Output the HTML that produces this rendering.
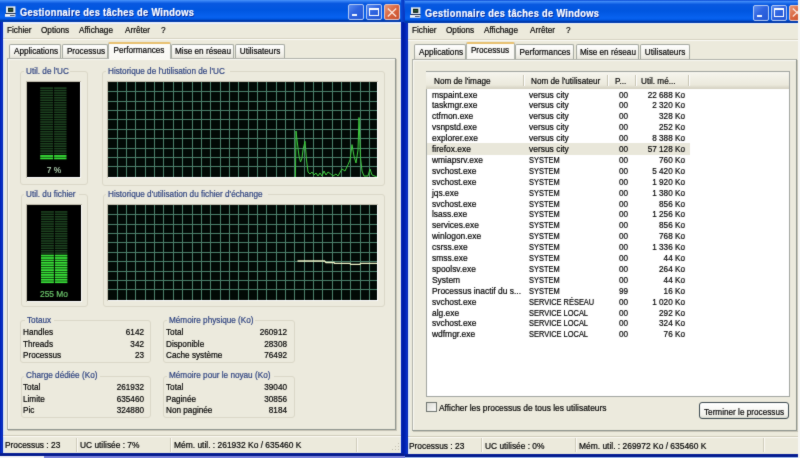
<!DOCTYPE html><html><head><meta charset="utf-8"><style>
html,body{margin:0;padding:0;width:800px;height:458px;overflow:hidden;background:#0022b0;position:relative;font-family:"Liberation Sans", sans-serif;}
.win{position:absolute;width:404px;height:458px;}
.r{position:absolute;}
.all{position:absolute;left:0;top:0;width:800px;height:458px;overflow:hidden;filter:url(#bl);}
.t{position:absolute;white-space:pre;-webkit-text-stroke:0.2px currentColor;}
</style></head><body><svg width="0" height="0" style="position:absolute"><filter id="bl" x="0" y="0" width="100%" height="100%" color-interpolation-filters="sRGB"><feConvolveMatrix order="3" kernelMatrix="0.02 0.07 0.02 0.07 0.64 0.07 0.02 0.07 0.02" edgeMode="duplicate"/></filter></svg><div class="all">
<div class="r" style="left:0.00px;top:0.00px;width:800.00px;height:23.00px;background:linear-gradient(#1a5ee0,#0a3cc8 50%,#0836b8);"></div>
<div class="r" style="left:0.00px;top:455.50px;width:800.00px;height:2.50px;background:#a8c2f0;"></div>
<div class="r" style="left:44.00px;top:455.50px;width:361.00px;height:2.50px;background:#7c84dc;"></div>
<div class="r" style="left:0.00px;top:455.50px;width:44.00px;height:2.50px;background:#f4f4f8;"></div>
<div class="win" style="left:0px;top:0px;">
<div class="r" style="left:0.00px;top:0.00px;width:404.00px;height:456.00px;background:#0022b0;"></div>
<div class="r" style="left:0.00px;top:0.00px;width:404.00px;height:22.00px;background:linear-gradient(#4a94fa 0,#2a78f0 1.5px,#0858e0 3.5px,#0056e0 45%,#0862f0 78%,#0058e4 86%,#0038a8 94%,#003cb0 100%);"></div>
<div class="r" style="left:0.00px;top:22.00px;width:3.00px;height:434.00px;background:linear-gradient(90deg,#0020b0,#0830c8 50%,#0020b0);"></div>
<div class="r" style="left:401.00px;top:22.00px;width:3.00px;height:434.00px;background:linear-gradient(90deg,#0024b4,#0020ac 50%,#001ca4);"></div>
<div class="r" style="left:401.00px;top:0.00px;width:3.00px;height:22.00px;background:linear-gradient(90deg,#0a4ad8,#0838c0);"></div>
<div class="r" style="left:0.00px;top:453.00px;width:404.00px;height:3.00px;background:linear-gradient(#0a2098,#001888);"></div>
<div class="r" style="left:3.00px;top:22.00px;width:398.00px;height:431.00px;background:#eceadc;"></div>
<div class="r" style="left:3.00px;top:22.00px;width:2.00px;height:431.00px;background:linear-gradient(90deg,#d4e2f6,#e4ecf0);"></div>
<div class="r" style="left:400.00px;top:22.00px;width:1.00px;height:431.00px;background:#dfe6f2;"></div>
<div class="r" style="left:3.00px;top:22.00px;width:398.00px;height:1.50px;background:#eaf0fa;"></div>
<svg class="r" style="left:5px;top:6px" width="11" height="11" viewBox="0 0 11 11"><rect x="1" y="0.3" width="9.4" height="6.8" fill="#e4ecf0"/><rect x="3" y="1.8" width="5.3" height="4.1" fill="#0c1c14"/><rect x="3.6" y="3.3" width="4" height="1.1" fill="#3a7a4a"/><rect x="0.6" y="7" width="10" height="0.9" fill="#1a2a4a"/><rect x="0" y="8" width="10.4" height="2.8" fill="#eef2f6"/><rect x="5" y="9" width="4.6" height="0.9" fill="#3a4660"/></svg>
<div class="t" style="left:20.00px;top:7.42px;font-size:10.6px;line-height:10.6px;color:#fff;font-weight:bold;letter-spacing:0.35px;transform:scaleX(0.875);transform-origin:0 0;text-shadow:1px 1px 0 #0a2a9a;">Gestionnaire des tâches de Windows</div>
<div class="r" style="left:347.70px;top:4.10px;width:16.00px;height:16.20px;background:linear-gradient(135deg,#5a8cf0,#2f64e0 45%,#2458d4);border:1px solid #b4cbf4;border-radius:2px;box-sizing:border-box;"></div>
<div class="r" style="left:351.70px;top:14.30px;width:5.00px;height:2.20px;background:#f4f8ff;"></div>
<div class="r" style="left:365.80px;top:4.10px;width:16.00px;height:16.20px;background:linear-gradient(135deg,#5a8cf0,#2f64e0 45%,#2458d4);border:1px solid #b4cbf4;border-radius:2px;box-sizing:border-box;"></div>
<div class="r" style="left:368.50px;top:7.70px;width:10.20px;height:8.50px;border:1px solid #fff;border-top-width:2px;box-sizing:border-box;"></div>
<div class="r" style="left:383.90px;top:4.10px;width:16.00px;height:16.20px;background:linear-gradient(135deg,#e89878,#d8643e 50%,#c8502e);border:1px solid #e8c4bc;border-radius:2px;box-sizing:border-box;"></div>
<svg class="r" style="left:386.90px;top:7.5px" width="10" height="9" viewBox="0 0 10 9"><path d="M0.8 0.6 L9.2 8.4 M9.2 0.6 L0.8 8.4" stroke="#fbe8e0" stroke-width="1.3"/></svg>
<div class="t" style="left:7.00px;top:25.96px;font-size:8.8px;line-height:8.8px;color:#000;font-weight:normal;letter-spacing:0px;transform:scaleX(0.93);transform-origin:0 0;">Fichier</div>
<div class="t" style="left:40.90px;top:25.96px;font-size:8.8px;line-height:8.8px;color:#000;font-weight:normal;letter-spacing:0px;transform:scaleX(0.93);transform-origin:0 0;">Options</div>
<div class="t" style="left:79.30px;top:25.96px;font-size:8.8px;line-height:8.8px;color:#000;font-weight:normal;letter-spacing:0px;transform:scaleX(0.93);transform-origin:0 0;">Affichage</div>
<div class="t" style="left:124.50px;top:25.96px;font-size:8.8px;line-height:8.8px;color:#000;font-weight:normal;letter-spacing:0px;transform:scaleX(0.93);transform-origin:0 0;">Arrêter</div>
<div class="t" style="left:160.60px;top:25.96px;font-size:8.8px;line-height:8.8px;color:#000;font-weight:normal;letter-spacing:0px;transform:scaleX(0.93);transform-origin:0 0;">?</div>
<div class="r" style="left:3.00px;top:38.00px;width:398.00px;height:1.00px;background:#d6d2c2;"></div>
<div class="r" style="left:3.00px;top:39.00px;width:398.00px;height:1.00px;background:#fbfaf5;"></div>
<div class="r" style="left:7.00px;top:58.00px;width:389.00px;height:372.00px;background:#eceadd;border:1px solid #b0b2aa;border-right-color:#8e948e;border-bottom-color:#8e948e;box-sizing:border-box;box-shadow:1px 1px 0 #c8c6b8, inset 1px 1px 0 #faf9f4;"></div>
<div class="r" style="left:9.00px;top:43.50px;width:52.00px;height:14.50px;background:linear-gradient(#fefefe,#f2f1ea 70%,#e6e4da);border:1px solid #a4a8a0;border-bottom:none;border-radius:2px 2px 0 0;box-sizing:border-box;"></div>
<div class="t" style="left:-114.50px;width:300px;text-align:center;top:47.26px;font-size:8.8px;line-height:8.8px;color:#000;letter-spacing:0px;transform:scaleX(0.93);transform-origin:50% 0;">Applications</div>
<div class="r" style="left:62.00px;top:43.50px;width:46.00px;height:14.50px;background:linear-gradient(#fefefe,#f2f1ea 70%,#e6e4da);border:1px solid #a4a8a0;border-bottom:none;border-radius:2px 2px 0 0;box-sizing:border-box;"></div>
<div class="t" style="left:-64.50px;width:300px;text-align:center;top:47.26px;font-size:8.8px;line-height:8.8px;color:#000;letter-spacing:0px;transform:scaleX(0.93);transform-origin:50% 0;">Processus</div>
<div class="r" style="left:108.00px;top:41.80px;width:62.50px;height:17.20px;background:linear-gradient(#fcfcfa,#f8f7f2);border:1px solid #b0b4ac;border-bottom:none;border-top:2px solid #e8c070;border-radius:2px 2px 0 0;box-sizing:border-box;"></div>
<div class="t" style="left:-10.75px;width:300px;text-align:center;top:45.96px;font-size:8.8px;line-height:8.8px;color:#000;letter-spacing:0px;transform:scaleX(0.93);transform-origin:50% 0;">Performances</div>
<div class="r" style="left:170.50px;top:43.50px;width:63.50px;height:14.50px;background:linear-gradient(#fefefe,#f2f1ea 70%,#e6e4da);border:1px solid #a4a8a0;border-bottom:none;border-radius:2px 2px 0 0;box-sizing:border-box;"></div>
<div class="t" style="left:52.75px;width:300px;text-align:center;top:47.26px;font-size:8.8px;line-height:8.8px;color:#000;letter-spacing:0px;transform:scaleX(0.93);transform-origin:50% 0;">Mise en réseau</div>
<div class="r" style="left:235.00px;top:43.50px;width:49.50px;height:14.50px;background:linear-gradient(#fefefe,#f2f1ea 70%,#e6e4da);border:1px solid #a4a8a0;border-bottom:none;border-radius:2px 2px 0 0;box-sizing:border-box;"></div>
<div class="t" style="left:110.25px;width:300px;text-align:center;top:47.26px;font-size:8.8px;line-height:8.8px;color:#000;letter-spacing:0px;transform:scaleX(0.93);transform-origin:50% 0;">Utilisateurs</div>
<div class="r" style="left:3.00px;top:435.20px;width:398.00px;height:1.00px;background:#cfcbbb;"></div>
<div class="r" style="left:3.00px;top:436.20px;width:398.00px;height:1.00px;background:#fbfaf4;"></div>
</div>
<div class="win" style="left:0;top:0">
<div class="r" style="left:20.00px;top:70.60px;width:67.50px;height:114.60px;border:1px solid #dad7c7;border-radius:3px;box-sizing:border-box;"></div>
<div class="r" style="left:23.60px;top:66.60px;width:46.50px;height:8.00px;background:#eceadd;"></div>
<div class="t" style="left:25.60px;top:66.96px;font-size:8.8px;line-height:8.8px;color:#2a3f7e;font-weight:normal;letter-spacing:0px;transform:scaleX(0.93);transform-origin:0 0;">Util. de l'UC</div>
<div class="r" style="left:102.00px;top:70.60px;width:282.50px;height:115.00px;border:1px solid #dad7c7;border-radius:3px;box-sizing:border-box;"></div>
<div class="r" style="left:106.00px;top:66.60px;width:123.50px;height:8.00px;background:#eceadd;"></div>
<div class="t" style="left:108.00px;top:66.96px;font-size:8.8px;line-height:8.8px;color:#2a3f7e;font-weight:normal;letter-spacing:0px;transform:scaleX(0.93);transform-origin:0 0;">Historique de l'utilisation de l'UC</div>
<div class="r" style="left:20.50px;top:193.50px;width:67.00px;height:113.80px;border:1px solid #dad7c7;border-radius:3px;box-sizing:border-box;"></div>
<div class="r" style="left:24.10px;top:189.50px;width:54.50px;height:8.00px;background:#eceadd;"></div>
<div class="t" style="left:26.10px;top:190.26px;font-size:8.8px;line-height:8.8px;color:#2a3f7e;font-weight:normal;letter-spacing:0px;transform:scaleX(0.93);transform-origin:0 0;">Util. du fichier</div>
<div class="r" style="left:102.50px;top:193.50px;width:282.00px;height:113.80px;border:1px solid #dad7c7;border-radius:3px;box-sizing:border-box;"></div>
<div class="r" style="left:106.30px;top:189.50px;width:161.50px;height:8.00px;background:#eceadd;"></div>
<div class="t" style="left:108.30px;top:190.26px;font-size:8.8px;line-height:8.8px;color:#2a3f7e;font-weight:normal;letter-spacing:0px;transform:scaleX(0.93);transform-origin:0 0;">Historique d'utilisation du fichier d'échange</div>
<div class="r" style="left:20.30px;top:320.00px;width:131.00px;height:42.60px;border:1px solid #dad7c7;border-radius:3px;box-sizing:border-box;"></div>
<div class="r" style="left:24.80px;top:316.00px;width:29.50px;height:8.00px;background:#eceadd;"></div>
<div class="t" style="left:26.80px;top:315.66px;font-size:8.8px;line-height:8.8px;color:#2a3f7e;font-weight:normal;letter-spacing:0px;transform:scaleX(0.93);transform-origin:0 0;">Totaux</div>
<div class="r" style="left:162.80px;top:320.00px;width:132.70px;height:42.50px;border:1px solid #dad7c7;border-radius:3px;box-sizing:border-box;"></div>
<div class="r" style="left:166.80px;top:316.00px;width:88.50px;height:8.00px;background:#eceadd;"></div>
<div class="t" style="left:168.80px;top:316.06px;font-size:8.8px;line-height:8.8px;color:#2a3f7e;font-weight:normal;letter-spacing:0px;transform:scaleX(0.93);transform-origin:0 0;">Mémoire physique (Ko)</div>
<div class="r" style="left:20.80px;top:376.00px;width:130.50px;height:41.50px;border:1px solid #dad7c7;border-radius:3px;box-sizing:border-box;"></div>
<div class="r" style="left:24.10px;top:372.00px;width:75.50px;height:8.00px;background:#eceadd;"></div>
<div class="t" style="left:26.10px;top:371.06px;font-size:8.8px;line-height:8.8px;color:#2a3f7e;font-weight:normal;letter-spacing:0px;transform:scaleX(0.93);transform-origin:0 0;">Charge dédiée (Ko)</div>
<div class="r" style="left:162.80px;top:376.00px;width:132.70px;height:41.50px;border:1px solid #dad7c7;border-radius:3px;box-sizing:border-box;"></div>
<div class="r" style="left:166.80px;top:372.00px;width:107.50px;height:8.00px;background:#eceadd;"></div>
<div class="t" style="left:168.80px;top:371.06px;font-size:8.8px;line-height:8.8px;color:#2a3f7e;font-weight:normal;letter-spacing:0px;transform:scaleX(0.93);transform-origin:0 0;">Mémoire pour le noyau (Ko)</div>
<div class="r" style="left:26.00px;top:81.00px;width:55.00px;height:97.00px;background:#fff;border-top:1px solid #c4c0b0;border-left:1px solid #c4c0b0;box-sizing:border-box;"></div>
<div class="r" style="left:27.00px;top:82.00px;width:53.00px;height:95.00px;background:#000;"></div>
<svg class="r" style="left:27px;top:82px" width="53" height="95"><rect x="13.20" y="75.50" width="12.90" height="1.8" fill="#38e238"/><rect x="27.10" y="75.50" width="12.40" height="1.8" fill="#38e238"/><rect x="13.20" y="73.08" width="12.90" height="1.8" fill="#38e238"/><rect x="27.10" y="73.08" width="12.40" height="1.8" fill="#38e238"/><rect x="13.20" y="70.66" width="12.90" height="1.6" fill="#1d4320"/><rect x="27.10" y="70.66" width="12.40" height="1.6" fill="#1d4320"/><rect x="13.20" y="68.24" width="12.90" height="1.6" fill="#1d4320"/><rect x="27.10" y="68.24" width="12.40" height="1.6" fill="#1d4320"/><rect x="13.20" y="65.82" width="12.90" height="1.6" fill="#1d4320"/><rect x="27.10" y="65.82" width="12.40" height="1.6" fill="#1d4320"/><rect x="13.20" y="63.40" width="12.90" height="1.6" fill="#1d4320"/><rect x="27.10" y="63.40" width="12.40" height="1.6" fill="#1d4320"/><rect x="13.20" y="60.98" width="12.90" height="1.6" fill="#1d4320"/><rect x="27.10" y="60.98" width="12.40" height="1.6" fill="#1d4320"/><rect x="13.20" y="58.56" width="12.90" height="1.6" fill="#1d4320"/><rect x="27.10" y="58.56" width="12.40" height="1.6" fill="#1d4320"/><rect x="13.20" y="56.14" width="12.90" height="1.6" fill="#1d4320"/><rect x="27.10" y="56.14" width="12.40" height="1.6" fill="#1d4320"/><rect x="13.20" y="53.72" width="12.90" height="1.6" fill="#1d4320"/><rect x="27.10" y="53.72" width="12.40" height="1.6" fill="#1d4320"/><rect x="13.20" y="51.30" width="12.90" height="1.6" fill="#1d4320"/><rect x="27.10" y="51.30" width="12.40" height="1.6" fill="#1d4320"/><rect x="13.20" y="48.88" width="12.90" height="1.6" fill="#1d4320"/><rect x="27.10" y="48.88" width="12.40" height="1.6" fill="#1d4320"/><rect x="13.20" y="46.46" width="12.90" height="1.6" fill="#1d4320"/><rect x="27.10" y="46.46" width="12.40" height="1.6" fill="#1d4320"/><rect x="13.20" y="44.04" width="12.90" height="1.6" fill="#1d4320"/><rect x="27.10" y="44.04" width="12.40" height="1.6" fill="#1d4320"/><rect x="13.20" y="41.62" width="12.90" height="1.6" fill="#1d4320"/><rect x="27.10" y="41.62" width="12.40" height="1.6" fill="#1d4320"/><rect x="13.20" y="39.20" width="12.90" height="1.6" fill="#1d4320"/><rect x="27.10" y="39.20" width="12.40" height="1.6" fill="#1d4320"/><rect x="13.20" y="36.78" width="12.90" height="1.6" fill="#1d4320"/><rect x="27.10" y="36.78" width="12.40" height="1.6" fill="#1d4320"/><rect x="13.20" y="34.36" width="12.90" height="1.6" fill="#1d4320"/><rect x="27.10" y="34.36" width="12.40" height="1.6" fill="#1d4320"/><rect x="13.20" y="31.94" width="12.90" height="1.6" fill="#1d4320"/><rect x="27.10" y="31.94" width="12.40" height="1.6" fill="#1d4320"/><rect x="13.20" y="29.52" width="12.90" height="1.6" fill="#1d4320"/><rect x="27.10" y="29.52" width="12.40" height="1.6" fill="#1d4320"/><rect x="13.20" y="27.10" width="12.90" height="1.6" fill="#1d4320"/><rect x="27.10" y="27.10" width="12.40" height="1.6" fill="#1d4320"/><rect x="13.20" y="24.68" width="12.90" height="1.6" fill="#1d4320"/><rect x="27.10" y="24.68" width="12.40" height="1.6" fill="#1d4320"/><rect x="13.20" y="22.26" width="12.90" height="1.6" fill="#1d4320"/><rect x="27.10" y="22.26" width="12.40" height="1.6" fill="#1d4320"/><rect x="13.20" y="19.84" width="12.90" height="1.6" fill="#1d4320"/><rect x="27.10" y="19.84" width="12.40" height="1.6" fill="#1d4320"/><rect x="13.20" y="17.42" width="12.90" height="1.6" fill="#1d4320"/><rect x="27.10" y="17.42" width="12.40" height="1.6" fill="#1d4320"/><rect x="13.20" y="15.00" width="12.90" height="1.6" fill="#1d4320"/><rect x="27.10" y="15.00" width="12.40" height="1.6" fill="#1d4320"/><rect x="13.20" y="12.58" width="12.90" height="1.6" fill="#1d4320"/><rect x="27.10" y="12.58" width="12.40" height="1.6" fill="#1d4320"/><rect x="13.20" y="10.16" width="12.90" height="1.6" fill="#1d4320"/><rect x="27.10" y="10.16" width="12.40" height="1.6" fill="#1d4320"/><rect x="13.20" y="7.74" width="12.90" height="1.6" fill="#1d4320"/><rect x="27.10" y="7.74" width="12.40" height="1.6" fill="#1d4320"/><rect x="13.20" y="5.32" width="12.90" height="1.6" fill="#1d4320"/><rect x="27.10" y="5.32" width="12.40" height="1.6" fill="#1d4320"/></svg>
<div class="t" style="left:-96.50px;width:300px;text-align:center;top:166.20px;font-size:9px;line-height:9px;color:#b4d4b4;letter-spacing:0px;transform:scaleX(0.93);transform-origin:50% 0;">7 %</div>
<div class="r" style="left:26.00px;top:204.00px;width:56.00px;height:98.00px;background:#fff;border-top:1px solid #c4c0b0;border-left:1px solid #c4c0b0;box-sizing:border-box;"></div>
<div class="r" style="left:27.00px;top:205.00px;width:54.00px;height:96.00px;background:#000;"></div>
<svg class="r" style="left:27px;top:205px" width="54" height="96"><rect x="14.00" y="76.30" width="12.90" height="1.8" fill="#38e238"/><rect x="27.90" y="76.30" width="12.50" height="1.8" fill="#38e238"/><rect x="14.00" y="73.88" width="12.90" height="1.8" fill="#38e238"/><rect x="27.90" y="73.88" width="12.50" height="1.8" fill="#38e238"/><rect x="14.00" y="71.46" width="12.90" height="1.8" fill="#38e238"/><rect x="27.90" y="71.46" width="12.50" height="1.8" fill="#38e238"/><rect x="14.00" y="69.04" width="12.90" height="1.8" fill="#38e238"/><rect x="27.90" y="69.04" width="12.50" height="1.8" fill="#38e238"/><rect x="14.00" y="66.62" width="12.90" height="1.8" fill="#38e238"/><rect x="27.90" y="66.62" width="12.50" height="1.8" fill="#38e238"/><rect x="14.00" y="64.20" width="12.90" height="1.8" fill="#38e238"/><rect x="27.90" y="64.20" width="12.50" height="1.8" fill="#38e238"/><rect x="14.00" y="61.78" width="12.90" height="1.8" fill="#38e238"/><rect x="27.90" y="61.78" width="12.50" height="1.8" fill="#38e238"/><rect x="14.00" y="59.36" width="12.90" height="1.8" fill="#38e238"/><rect x="27.90" y="59.36" width="12.50" height="1.8" fill="#38e238"/><rect x="14.00" y="56.94" width="12.90" height="1.8" fill="#38e238"/><rect x="27.90" y="56.94" width="12.50" height="1.8" fill="#38e238"/><rect x="14.00" y="54.52" width="12.90" height="1.8" fill="#38e238"/><rect x="27.90" y="54.52" width="12.50" height="1.8" fill="#38e238"/><rect x="14.00" y="52.10" width="12.90" height="1.8" fill="#38e238"/><rect x="27.90" y="52.10" width="12.50" height="1.8" fill="#38e238"/><rect x="14.00" y="49.68" width="12.90" height="1.8" fill="#38e238"/><rect x="27.90" y="49.68" width="12.50" height="1.8" fill="#38e238"/><rect x="14.00" y="47.26" width="12.90" height="1.6" fill="#1d4320"/><rect x="27.90" y="47.26" width="12.50" height="1.6" fill="#1d4320"/><rect x="14.00" y="44.84" width="12.90" height="1.6" fill="#1d4320"/><rect x="27.90" y="44.84" width="12.50" height="1.6" fill="#1d4320"/><rect x="14.00" y="42.42" width="12.90" height="1.6" fill="#1d4320"/><rect x="27.90" y="42.42" width="12.50" height="1.6" fill="#1d4320"/><rect x="14.00" y="40.00" width="12.90" height="1.6" fill="#1d4320"/><rect x="27.90" y="40.00" width="12.50" height="1.6" fill="#1d4320"/><rect x="14.00" y="37.58" width="12.90" height="1.6" fill="#1d4320"/><rect x="27.90" y="37.58" width="12.50" height="1.6" fill="#1d4320"/><rect x="14.00" y="35.16" width="12.90" height="1.6" fill="#1d4320"/><rect x="27.90" y="35.16" width="12.50" height="1.6" fill="#1d4320"/><rect x="14.00" y="32.74" width="12.90" height="1.6" fill="#1d4320"/><rect x="27.90" y="32.74" width="12.50" height="1.6" fill="#1d4320"/><rect x="14.00" y="30.32" width="12.90" height="1.6" fill="#1d4320"/><rect x="27.90" y="30.32" width="12.50" height="1.6" fill="#1d4320"/><rect x="14.00" y="27.90" width="12.90" height="1.6" fill="#1d4320"/><rect x="27.90" y="27.90" width="12.50" height="1.6" fill="#1d4320"/><rect x="14.00" y="25.48" width="12.90" height="1.6" fill="#1d4320"/><rect x="27.90" y="25.48" width="12.50" height="1.6" fill="#1d4320"/><rect x="14.00" y="23.06" width="12.90" height="1.6" fill="#1d4320"/><rect x="27.90" y="23.06" width="12.50" height="1.6" fill="#1d4320"/><rect x="14.00" y="20.64" width="12.90" height="1.6" fill="#1d4320"/><rect x="27.90" y="20.64" width="12.50" height="1.6" fill="#1d4320"/><rect x="14.00" y="18.22" width="12.90" height="1.6" fill="#1d4320"/><rect x="27.90" y="18.22" width="12.50" height="1.6" fill="#1d4320"/><rect x="14.00" y="15.80" width="12.90" height="1.6" fill="#1d4320"/><rect x="27.90" y="15.80" width="12.50" height="1.6" fill="#1d4320"/><rect x="14.00" y="13.38" width="12.90" height="1.6" fill="#1d4320"/><rect x="27.90" y="13.38" width="12.50" height="1.6" fill="#1d4320"/><rect x="14.00" y="10.96" width="12.90" height="1.6" fill="#1d4320"/><rect x="27.90" y="10.96" width="12.50" height="1.6" fill="#1d4320"/><rect x="14.00" y="8.54" width="12.90" height="1.6" fill="#1d4320"/><rect x="27.90" y="8.54" width="12.50" height="1.6" fill="#1d4320"/><rect x="14.00" y="6.12" width="12.90" height="1.6" fill="#1d4320"/><rect x="27.90" y="6.12" width="12.50" height="1.6" fill="#1d4320"/></svg>
<div class="t" style="left:-96.00px;width:300px;text-align:center;top:289.60px;font-size:9px;line-height:9px;color:#6cc86c;letter-spacing:0px;transform:scaleX(0.93);transform-origin:50% 0;">255 Mo</div>
<div class="r" style="left:107.00px;top:81.00px;width:271.00px;height:97.00px;background:#fff;border-top:1px solid #c4c0b0;border-left:1px solid #c4c0b0;box-sizing:border-box;"></div>
<svg class="r" style="left:108px;top:82px" width="269" height="95"><rect width="100%" height="100%" fill="#020a06"/><rect x="9" y="0" width="1" height="95" fill="#4c826c"/><rect x="18" y="0" width="1" height="95" fill="#4c826c"/><rect x="27" y="0" width="1" height="95" fill="#4c826c"/><rect x="37" y="0" width="1" height="95" fill="#4c826c"/><rect x="46" y="0" width="1" height="95" fill="#4c826c"/><rect x="55" y="0" width="1" height="95" fill="#4c826c"/><rect x="65" y="0" width="1" height="95" fill="#4c826c"/><rect x="74" y="0" width="1" height="95" fill="#4c826c"/><rect x="84" y="0" width="1" height="95" fill="#4c826c"/><rect x="93" y="0" width="1" height="95" fill="#4c826c"/><rect x="102" y="0" width="1" height="95" fill="#4c826c"/><rect x="112" y="0" width="1" height="95" fill="#4c826c"/><rect x="121" y="0" width="1" height="95" fill="#4c826c"/><rect x="130" y="0" width="1" height="95" fill="#4c826c"/><rect x="140" y="0" width="1" height="95" fill="#4c826c"/><rect x="149" y="0" width="1" height="95" fill="#4c826c"/><rect x="158" y="0" width="1" height="95" fill="#4c826c"/><rect x="168" y="0" width="1" height="95" fill="#4c826c"/><rect x="177" y="0" width="1" height="95" fill="#4c826c"/><rect x="186" y="0" width="1" height="95" fill="#4c826c"/><rect x="196" y="0" width="1" height="95" fill="#4c826c"/><rect x="205" y="0" width="1" height="95" fill="#4c826c"/><rect x="214" y="0" width="1" height="95" fill="#4c826c"/><rect x="224" y="0" width="1" height="95" fill="#4c826c"/><rect x="233" y="0" width="1" height="95" fill="#4c826c"/><rect x="242" y="0" width="1" height="95" fill="#4c826c"/><rect x="252" y="0" width="1" height="95" fill="#4c826c"/><rect x="261" y="0" width="1" height="95" fill="#4c826c"/><rect x="0" y="9" width="269" height="1" fill="#4c826c"/><rect x="0" y="19" width="269" height="1" fill="#4c826c"/><rect x="0" y="28" width="269" height="1" fill="#4c826c"/><rect x="0" y="37" width="269" height="1" fill="#4c826c"/><rect x="0" y="47" width="269" height="1" fill="#4c826c"/><rect x="0" y="56" width="269" height="1" fill="#4c826c"/><rect x="0" y="66" width="269" height="1" fill="#4c826c"/><rect x="0" y="75" width="269" height="1" fill="#4c826c"/><rect x="0" y="84" width="269" height="1" fill="#4c826c"/><polyline points="187.40,95.00 188.00,49.00 189.00,58.00 191.00,74.00 192.50,80.00 194.00,76.00 195.00,68.00 197.00,59.30 198.50,78.00 200.00,90.00 202.00,92.00 204.00,90.00 206.00,93.00 208.00,91.00 210.00,94.00 212.00,91.00 214.00,94.00 216.00,89.00 218.00,93.00 220.00,90.00 222.00,91.40 225.00,94.00 228.00,92.00 230.00,94.00 234.00,87.00 237.00,89.00 240.00,82.70 242.00,78.00 244.00,62.60 246.00,74.00 248.00,81.00 250.00,68.00 251.00,35.50 252.50,75.70 254.00,89.00 256.00,94.00 260.00,94.00 262.00,87.00 264.00,93.00 269.00,95.00" fill="none" stroke="#3fcf3f" stroke-width="1"/></svg>
<div class="r" style="left:107.00px;top:204.00px;width:271.00px;height:97.00px;background:#fff;border-top:1px solid #c4c0b0;border-left:1px solid #c4c0b0;box-sizing:border-box;"></div>
<svg class="r" style="left:108px;top:205px" width="269" height="95"><rect width="100%" height="100%" fill="#020a06"/><rect x="9" y="0" width="1" height="95" fill="#4c826c"/><rect x="18" y="0" width="1" height="95" fill="#4c826c"/><rect x="27" y="0" width="1" height="95" fill="#4c826c"/><rect x="37" y="0" width="1" height="95" fill="#4c826c"/><rect x="46" y="0" width="1" height="95" fill="#4c826c"/><rect x="55" y="0" width="1" height="95" fill="#4c826c"/><rect x="65" y="0" width="1" height="95" fill="#4c826c"/><rect x="74" y="0" width="1" height="95" fill="#4c826c"/><rect x="84" y="0" width="1" height="95" fill="#4c826c"/><rect x="93" y="0" width="1" height="95" fill="#4c826c"/><rect x="102" y="0" width="1" height="95" fill="#4c826c"/><rect x="112" y="0" width="1" height="95" fill="#4c826c"/><rect x="121" y="0" width="1" height="95" fill="#4c826c"/><rect x="130" y="0" width="1" height="95" fill="#4c826c"/><rect x="140" y="0" width="1" height="95" fill="#4c826c"/><rect x="149" y="0" width="1" height="95" fill="#4c826c"/><rect x="158" y="0" width="1" height="95" fill="#4c826c"/><rect x="168" y="0" width="1" height="95" fill="#4c826c"/><rect x="177" y="0" width="1" height="95" fill="#4c826c"/><rect x="186" y="0" width="1" height="95" fill="#4c826c"/><rect x="196" y="0" width="1" height="95" fill="#4c826c"/><rect x="205" y="0" width="1" height="95" fill="#4c826c"/><rect x="214" y="0" width="1" height="95" fill="#4c826c"/><rect x="224" y="0" width="1" height="95" fill="#4c826c"/><rect x="233" y="0" width="1" height="95" fill="#4c826c"/><rect x="242" y="0" width="1" height="95" fill="#4c826c"/><rect x="252" y="0" width="1" height="95" fill="#4c826c"/><rect x="261" y="0" width="1" height="95" fill="#4c826c"/><rect x="0" y="9" width="269" height="1" fill="#4c826c"/><rect x="0" y="19" width="269" height="1" fill="#4c826c"/><rect x="0" y="28" width="269" height="1" fill="#4c826c"/><rect x="0" y="37" width="269" height="1" fill="#4c826c"/><rect x="0" y="47" width="269" height="1" fill="#4c826c"/><rect x="0" y="56" width="269" height="1" fill="#4c826c"/><rect x="0" y="66" width="269" height="1" fill="#4c826c"/><rect x="0" y="75" width="269" height="1" fill="#4c826c"/><rect x="0" y="84" width="269" height="1" fill="#4c826c"/><polyline points="189.50,56.00 216.50,56.00 218.00,57.50 226.00,57.50 226.50,58.30 242.00,58.30 242.50,59.30 252.00,59.30 252.50,58.30 269.40,58.30" fill="none" stroke="#f0f4c8" stroke-width="1.3"/></svg>
<div class="t" style="left:23.00px;top:328.36px;font-size:8.8px;line-height:8.8px;color:#000;font-weight:normal;letter-spacing:0px;transform:scaleX(0.93);transform-origin:0 0;">Handles</div>
<div class="t" style="left:-156.00px;width:300px;text-align:right;top:328.36px;font-size:8.8px;line-height:8.8px;color:#000;letter-spacing:0px;transform:scaleX(0.93);transform-origin:100% 0;">6142</div>
<div class="t" style="left:166.00px;top:328.36px;font-size:8.8px;line-height:8.8px;color:#000;font-weight:normal;letter-spacing:0px;transform:scaleX(0.93);transform-origin:0 0;">Total</div>
<div class="t" style="left:-12.80px;width:300px;text-align:right;top:328.36px;font-size:8.8px;line-height:8.8px;color:#000;letter-spacing:0px;transform:scaleX(0.93);transform-origin:100% 0;">260912</div>
<div class="t" style="left:23.00px;top:339.56px;font-size:8.8px;line-height:8.8px;color:#000;font-weight:normal;letter-spacing:0px;transform:scaleX(0.93);transform-origin:0 0;">Threads</div>
<div class="t" style="left:-156.00px;width:300px;text-align:right;top:339.56px;font-size:8.8px;line-height:8.8px;color:#000;letter-spacing:0px;transform:scaleX(0.93);transform-origin:100% 0;">342</div>
<div class="t" style="left:166.00px;top:339.56px;font-size:8.8px;line-height:8.8px;color:#000;font-weight:normal;letter-spacing:0px;transform:scaleX(0.93);transform-origin:0 0;">Disponible</div>
<div class="t" style="left:-12.80px;width:300px;text-align:right;top:339.56px;font-size:8.8px;line-height:8.8px;color:#000;letter-spacing:0px;transform:scaleX(0.93);transform-origin:100% 0;">28308</div>
<div class="t" style="left:23.00px;top:350.96px;font-size:8.8px;line-height:8.8px;color:#000;font-weight:normal;letter-spacing:0px;transform:scaleX(0.93);transform-origin:0 0;">Processus</div>
<div class="t" style="left:-156.00px;width:300px;text-align:right;top:350.96px;font-size:8.8px;line-height:8.8px;color:#000;letter-spacing:0px;transform:scaleX(0.93);transform-origin:100% 0;">23</div>
<div class="t" style="left:166.00px;top:350.96px;font-size:8.8px;line-height:8.8px;color:#000;font-weight:normal;letter-spacing:0px;transform:scaleX(0.93);transform-origin:0 0;">Cache système</div>
<div class="t" style="left:-12.80px;width:300px;text-align:right;top:350.96px;font-size:8.8px;line-height:8.8px;color:#000;letter-spacing:0px;transform:scaleX(0.93);transform-origin:100% 0;">76492</div>
<div class="t" style="left:23.30px;top:383.46px;font-size:8.8px;line-height:8.8px;color:#000;font-weight:normal;letter-spacing:0px;transform:scaleX(0.93);transform-origin:0 0;">Total</div>
<div class="t" style="left:-156.00px;width:300px;text-align:right;top:383.46px;font-size:8.8px;line-height:8.8px;color:#000;letter-spacing:0px;transform:scaleX(0.93);transform-origin:100% 0;">261932</div>
<div class="t" style="left:166.00px;top:383.46px;font-size:8.8px;line-height:8.8px;color:#000;font-weight:normal;letter-spacing:0px;transform:scaleX(0.93);transform-origin:0 0;">Total</div>
<div class="t" style="left:-12.80px;width:300px;text-align:right;top:383.46px;font-size:8.8px;line-height:8.8px;color:#000;letter-spacing:0px;transform:scaleX(0.93);transform-origin:100% 0;">39040</div>
<div class="t" style="left:23.30px;top:395.16px;font-size:8.8px;line-height:8.8px;color:#000;font-weight:normal;letter-spacing:0px;transform:scaleX(0.93);transform-origin:0 0;">Limite</div>
<div class="t" style="left:-156.00px;width:300px;text-align:right;top:395.16px;font-size:8.8px;line-height:8.8px;color:#000;letter-spacing:0px;transform:scaleX(0.93);transform-origin:100% 0;">635460</div>
<div class="t" style="left:166.00px;top:395.16px;font-size:8.8px;line-height:8.8px;color:#000;font-weight:normal;letter-spacing:0px;transform:scaleX(0.93);transform-origin:0 0;">Paginée</div>
<div class="t" style="left:-12.80px;width:300px;text-align:right;top:395.16px;font-size:8.8px;line-height:8.8px;color:#000;letter-spacing:0px;transform:scaleX(0.93);transform-origin:100% 0;">30856</div>
<div class="t" style="left:23.30px;top:406.36px;font-size:8.8px;line-height:8.8px;color:#000;font-weight:normal;letter-spacing:0px;transform:scaleX(0.93);transform-origin:0 0;">Pic</div>
<div class="t" style="left:-156.00px;width:300px;text-align:right;top:406.36px;font-size:8.8px;line-height:8.8px;color:#000;letter-spacing:0px;transform:scaleX(0.93);transform-origin:100% 0;">324880</div>
<div class="t" style="left:166.00px;top:406.36px;font-size:8.8px;line-height:8.8px;color:#000;font-weight:normal;letter-spacing:0px;transform:scaleX(0.93);transform-origin:0 0;">Non paginée</div>
<div class="t" style="left:-12.80px;width:300px;text-align:right;top:406.36px;font-size:8.8px;line-height:8.8px;color:#000;letter-spacing:0px;transform:scaleX(0.93);transform-origin:100% 0;">8184</div>
<div class="t" style="left:5.00px;top:441.16px;font-size:8.8px;line-height:8.8px;color:#000;font-weight:normal;letter-spacing:0px;transform:scaleX(0.95);transform-origin:0 0;">Processus : 23</div>
<div class="t" style="left:80.00px;top:441.16px;font-size:8.8px;line-height:8.8px;color:#000;font-weight:normal;letter-spacing:0px;transform:scaleX(0.95);transform-origin:0 0;">UC utilisée : 7%</div>
<div class="t" style="left:173.75px;top:441.16px;font-size:8.8px;line-height:8.8px;color:#000;font-weight:normal;letter-spacing:0px;transform:scaleX(0.958);transform-origin:0 0;">Mém. util. : 261932 Ko / 635460 K</div>
<div class="r" style="left:398.00px;top:443.00px;width:1.30px;height:1.30px;background:#c4c0b0;"></div>
<div class="r" style="left:395.00px;top:446.00px;width:1.30px;height:1.30px;background:#c4c0b0;"></div>
<div class="r" style="left:398.00px;top:446.00px;width:1.30px;height:1.30px;background:#c4c0b0;"></div>
<div class="r" style="left:392.00px;top:449.00px;width:1.30px;height:1.30px;background:#c4c0b0;"></div>
<div class="r" style="left:395.00px;top:449.00px;width:1.30px;height:1.30px;background:#c4c0b0;"></div>
<div class="r" style="left:398.00px;top:449.00px;width:1.30px;height:1.30px;background:#c4c0b0;"></div>
<div class="r" style="left:75.50px;top:438.00px;width:1.00px;height:14.00px;background:#cfcbbb;"></div>
<div class="r" style="left:76.50px;top:438.00px;width:1.00px;height:14.00px;background:#fbfaf4;"></div>
<div class="r" style="left:170.00px;top:438.00px;width:1.00px;height:14.00px;background:#cfcbbb;"></div>
<div class="r" style="left:171.00px;top:438.00px;width:1.00px;height:14.00px;background:#fbfaf4;"></div>
<div class="r" style="left:356.00px;top:438.00px;width:1.00px;height:14.00px;background:#cfcbbb;"></div>
<div class="r" style="left:357.00px;top:438.00px;width:1.00px;height:14.00px;background:#fbfaf4;"></div>
</div>
<div class="win" style="left:405px;top:0.5px;">
<div class="r" style="left:0.00px;top:0.00px;width:404.00px;height:456.00px;background:#0022b0;"></div>
<div class="r" style="left:0.00px;top:0.00px;width:404.00px;height:22.00px;background:linear-gradient(#4a94fa 0,#2a78f0 1.5px,#0858e0 3.5px,#0056e0 45%,#0862f0 78%,#0058e4 86%,#0038a8 94%,#003cb0 100%);"></div>
<div class="r" style="left:0.00px;top:22.00px;width:3.00px;height:434.00px;background:linear-gradient(90deg,#0020b0,#0830c8 50%,#0020b0);"></div>
<div class="r" style="left:401.00px;top:22.00px;width:3.00px;height:434.00px;background:linear-gradient(90deg,#0024b4,#0020ac 50%,#001ca4);"></div>
<div class="r" style="left:401.00px;top:0.00px;width:3.00px;height:22.00px;background:linear-gradient(90deg,#0a4ad8,#0838c0);"></div>
<div class="r" style="left:0.00px;top:453.00px;width:404.00px;height:3.00px;background:linear-gradient(#0a2098,#001888);"></div>
<div class="r" style="left:3.00px;top:22.00px;width:398.00px;height:431.00px;background:#eceadc;"></div>
<div class="r" style="left:3.00px;top:22.00px;width:2.00px;height:431.00px;background:linear-gradient(90deg,#d4e2f6,#e4ecf0);"></div>
<div class="r" style="left:400.00px;top:22.00px;width:1.00px;height:431.00px;background:#dfe6f2;"></div>
<div class="r" style="left:3.00px;top:22.00px;width:398.00px;height:1.50px;background:#eaf0fa;"></div>
<svg class="r" style="left:5px;top:6px" width="11" height="11" viewBox="0 0 11 11"><rect x="1" y="0.3" width="9.4" height="6.8" fill="#e4ecf0"/><rect x="3" y="1.8" width="5.3" height="4.1" fill="#0c1c14"/><rect x="3.6" y="3.3" width="4" height="1.1" fill="#3a7a4a"/><rect x="0.6" y="7" width="10" height="0.9" fill="#1a2a4a"/><rect x="0" y="8" width="10.4" height="2.8" fill="#eef2f6"/><rect x="5" y="9" width="4.6" height="0.9" fill="#3a4660"/></svg>
<div class="t" style="left:20.00px;top:7.42px;font-size:10.6px;line-height:10.6px;color:#fff;font-weight:bold;letter-spacing:0.35px;transform:scaleX(0.875);transform-origin:0 0;text-shadow:1px 1px 0 #0a2a9a;">Gestionnaire des tâches de Windows</div>
<div class="r" style="left:347.70px;top:4.10px;width:16.00px;height:16.20px;background:linear-gradient(135deg,#5a8cf0,#2f64e0 45%,#2458d4);border:1px solid #b4cbf4;border-radius:2px;box-sizing:border-box;"></div>
<div class="r" style="left:351.70px;top:14.30px;width:5.00px;height:2.20px;background:#f4f8ff;"></div>
<div class="r" style="left:365.80px;top:4.10px;width:16.00px;height:16.20px;background:linear-gradient(135deg,#5a8cf0,#2f64e0 45%,#2458d4);border:1px solid #b4cbf4;border-radius:2px;box-sizing:border-box;"></div>
<div class="r" style="left:368.50px;top:7.70px;width:10.20px;height:8.50px;border:1px solid #fff;border-top-width:2px;box-sizing:border-box;"></div>
<div class="r" style="left:383.90px;top:4.10px;width:16.00px;height:16.20px;background:linear-gradient(135deg,#e89878,#d8643e 50%,#c8502e);border:1px solid #e8c4bc;border-radius:2px;box-sizing:border-box;"></div>
<svg class="r" style="left:386.90px;top:7.5px" width="10" height="9" viewBox="0 0 10 9"><path d="M0.8 0.6 L9.2 8.4 M9.2 0.6 L0.8 8.4" stroke="#fbe8e0" stroke-width="1.3"/></svg>
<div class="t" style="left:7.00px;top:25.96px;font-size:8.8px;line-height:8.8px;color:#000;font-weight:normal;letter-spacing:0px;transform:scaleX(0.93);transform-origin:0 0;">Fichier</div>
<div class="t" style="left:40.90px;top:25.96px;font-size:8.8px;line-height:8.8px;color:#000;font-weight:normal;letter-spacing:0px;transform:scaleX(0.93);transform-origin:0 0;">Options</div>
<div class="t" style="left:79.30px;top:25.96px;font-size:8.8px;line-height:8.8px;color:#000;font-weight:normal;letter-spacing:0px;transform:scaleX(0.93);transform-origin:0 0;">Affichage</div>
<div class="t" style="left:124.50px;top:25.96px;font-size:8.8px;line-height:8.8px;color:#000;font-weight:normal;letter-spacing:0px;transform:scaleX(0.93);transform-origin:0 0;">Arrêter</div>
<div class="t" style="left:160.60px;top:25.96px;font-size:8.8px;line-height:8.8px;color:#000;font-weight:normal;letter-spacing:0px;transform:scaleX(0.93);transform-origin:0 0;">?</div>
<div class="r" style="left:3.00px;top:38.00px;width:398.00px;height:1.00px;background:#d6d2c2;"></div>
<div class="r" style="left:3.00px;top:39.00px;width:398.00px;height:1.00px;background:#fbfaf5;"></div>
<div class="r" style="left:7.00px;top:58.00px;width:385.00px;height:372.00px;background:#eceadd;border:1px solid #b0b2aa;border-right-color:#8e948e;border-bottom-color:#8e948e;box-sizing:border-box;box-shadow:1px 1px 0 #c8c6b8, inset 1px 1px 0 #faf9f4;"></div>
<div class="r" style="left:9.00px;top:43.50px;width:52.00px;height:14.50px;background:linear-gradient(#fefefe,#f2f1ea 70%,#e6e4da);border:1px solid #a4a8a0;border-bottom:none;border-radius:2px 2px 0 0;box-sizing:border-box;"></div>
<div class="t" style="left:-114.50px;width:300px;text-align:center;top:47.26px;font-size:8.8px;line-height:8.8px;color:#000;letter-spacing:0px;transform:scaleX(0.93);transform-origin:50% 0;">Applications</div>
<div class="r" style="left:60.50px;top:41.80px;width:49.00px;height:17.20px;background:linear-gradient(#fcfcfa,#f8f7f2);border:1px solid #b0b4ac;border-bottom:none;border-top:2px solid #e8c070;border-radius:2px 2px 0 0;box-sizing:border-box;"></div>
<div class="t" style="left:-65.00px;width:300px;text-align:center;top:45.96px;font-size:8.8px;line-height:8.8px;color:#000;letter-spacing:0px;transform:scaleX(0.93);transform-origin:50% 0;">Processus</div>
<div class="r" style="left:109.50px;top:43.50px;width:59.50px;height:14.50px;background:linear-gradient(#fefefe,#f2f1ea 70%,#e6e4da);border:1px solid #a4a8a0;border-bottom:none;border-radius:2px 2px 0 0;box-sizing:border-box;"></div>
<div class="t" style="left:-10.25px;width:300px;text-align:center;top:47.26px;font-size:8.8px;line-height:8.8px;color:#000;letter-spacing:0px;transform:scaleX(0.93);transform-origin:50% 0;">Performances</div>
<div class="r" style="left:170.50px;top:43.50px;width:63.50px;height:14.50px;background:linear-gradient(#fefefe,#f2f1ea 70%,#e6e4da);border:1px solid #a4a8a0;border-bottom:none;border-radius:2px 2px 0 0;box-sizing:border-box;"></div>
<div class="t" style="left:52.75px;width:300px;text-align:center;top:47.26px;font-size:8.8px;line-height:8.8px;color:#000;letter-spacing:0px;transform:scaleX(0.93);transform-origin:50% 0;">Mise en réseau</div>
<div class="r" style="left:235.00px;top:43.50px;width:49.50px;height:14.50px;background:linear-gradient(#fefefe,#f2f1ea 70%,#e6e4da);border:1px solid #a4a8a0;border-bottom:none;border-radius:2px 2px 0 0;box-sizing:border-box;"></div>
<div class="t" style="left:110.25px;width:300px;text-align:center;top:47.26px;font-size:8.8px;line-height:8.8px;color:#000;letter-spacing:0px;transform:scaleX(0.93);transform-origin:50% 0;">Utilisateurs</div>
<div class="r" style="left:3.00px;top:435.20px;width:398.00px;height:1.00px;background:#cfcbbb;"></div>
<div class="r" style="left:3.00px;top:436.20px;width:398.00px;height:1.00px;background:#fbfaf4;"></div>
</div>
<div class="win" style="left:405px;top:0px">
<div class="r" style="left:21.00px;top:71.40px;width:363.80px;height:325.20px;background:#fff;border:1px solid #a0a4a0;box-sizing:border-box;"></div>
<div class="r" style="left:21.30px;top:72.40px;width:362.50px;height:16.00px;background:linear-gradient(#f6f5ee,#ebe9dc 80%,#d8d5c6);"></div>
<div class="r" style="left:21.30px;top:88.00px;width:362.50px;height:1.00px;background:#d6d3c3;"></div>
<div class="r" style="left:118.25px;top:75.00px;width:1.00px;height:11.00px;background:#c8c5b4;"></div>
<div class="r" style="left:119.25px;top:75.00px;width:1.00px;height:11.00px;background:#fff;"></div>
<div class="r" style="left:201.50px;top:75.00px;width:1.00px;height:11.00px;background:#c8c5b4;"></div>
<div class="r" style="left:202.50px;top:75.00px;width:1.00px;height:11.00px;background:#fff;"></div>
<div class="r" style="left:229.80px;top:75.00px;width:1.00px;height:11.00px;background:#c8c5b4;"></div>
<div class="r" style="left:230.80px;top:75.00px;width:1.00px;height:11.00px;background:#fff;"></div>
<div class="r" style="left:283.10px;top:75.00px;width:1.00px;height:11.00px;background:#c8c5b4;"></div>
<div class="r" style="left:284.10px;top:75.00px;width:1.00px;height:11.00px;background:#fff;"></div>
<div class="t" style="left:28.80px;top:76.76px;font-size:8.8px;line-height:8.8px;color:#000;font-weight:normal;letter-spacing:0px;transform:scaleX(0.93);transform-origin:0 0;">Nom de l'image</div>
<div class="t" style="left:126.20px;top:76.76px;font-size:8.8px;line-height:8.8px;color:#000;font-weight:normal;letter-spacing:0px;transform:scaleX(0.93);transform-origin:0 0;">Nom de l'utilisateur</div>
<div class="t" style="left:209.50px;top:76.76px;font-size:8.8px;line-height:8.8px;color:#000;font-weight:normal;letter-spacing:0px;transform:scaleX(0.93);transform-origin:0 0;">P...</div>
<div class="t" style="left:236.40px;top:76.76px;font-size:8.8px;line-height:8.8px;color:#000;font-weight:normal;letter-spacing:0px;transform:scaleX(0.93);transform-origin:0 0;">Util. mé...</div>
<div class="t" style="left:26.80px;top:90.56px;font-size:8.8px;line-height:8.8px;color:#000;font-weight:normal;letter-spacing:0px;transform:scaleX(0.958);transform-origin:0 0;">mspaint.exe</div>
<div class="t" style="left:124.00px;top:90.56px;font-size:8.8px;line-height:8.8px;color:#000;font-weight:normal;letter-spacing:0px;transform:scaleX(0.958);transform-origin:0 0;">versus city</div>
<div class="t" style="left:-76.70px;width:300px;text-align:right;top:90.56px;font-size:8.8px;line-height:8.8px;color:#000;letter-spacing:0px;transform:scaleX(0.93);transform-origin:100% 0;">00</div>
<div class="t" style="left:-19.80px;width:300px;text-align:right;top:90.56px;font-size:8.8px;line-height:8.8px;color:#000;letter-spacing:0px;transform:scaleX(0.93);transform-origin:100% 0;">22 688 Ko</div>
<div class="t" style="left:26.80px;top:101.46px;font-size:8.8px;line-height:8.8px;color:#000;font-weight:normal;letter-spacing:0px;transform:scaleX(0.958);transform-origin:0 0;">taskmgr.exe</div>
<div class="t" style="left:124.00px;top:101.46px;font-size:8.8px;line-height:8.8px;color:#000;font-weight:normal;letter-spacing:0px;transform:scaleX(0.958);transform-origin:0 0;">versus city</div>
<div class="t" style="left:-76.70px;width:300px;text-align:right;top:101.46px;font-size:8.8px;line-height:8.8px;color:#000;letter-spacing:0px;transform:scaleX(0.93);transform-origin:100% 0;">00</div>
<div class="t" style="left:-19.80px;width:300px;text-align:right;top:101.46px;font-size:8.8px;line-height:8.8px;color:#000;letter-spacing:0px;transform:scaleX(0.93);transform-origin:100% 0;">2 320 Ko</div>
<div class="t" style="left:26.80px;top:112.36px;font-size:8.8px;line-height:8.8px;color:#000;font-weight:normal;letter-spacing:0px;transform:scaleX(0.958);transform-origin:0 0;">ctfmon.exe</div>
<div class="t" style="left:124.00px;top:112.36px;font-size:8.8px;line-height:8.8px;color:#000;font-weight:normal;letter-spacing:0px;transform:scaleX(0.958);transform-origin:0 0;">versus city</div>
<div class="t" style="left:-76.70px;width:300px;text-align:right;top:112.36px;font-size:8.8px;line-height:8.8px;color:#000;letter-spacing:0px;transform:scaleX(0.93);transform-origin:100% 0;">00</div>
<div class="t" style="left:-19.80px;width:300px;text-align:right;top:112.36px;font-size:8.8px;line-height:8.8px;color:#000;letter-spacing:0px;transform:scaleX(0.93);transform-origin:100% 0;">328 Ko</div>
<div class="t" style="left:26.80px;top:123.26px;font-size:8.8px;line-height:8.8px;color:#000;font-weight:normal;letter-spacing:0px;transform:scaleX(0.958);transform-origin:0 0;">vsnpstd.exe</div>
<div class="t" style="left:124.00px;top:123.26px;font-size:8.8px;line-height:8.8px;color:#000;font-weight:normal;letter-spacing:0px;transform:scaleX(0.958);transform-origin:0 0;">versus city</div>
<div class="t" style="left:-76.70px;width:300px;text-align:right;top:123.26px;font-size:8.8px;line-height:8.8px;color:#000;letter-spacing:0px;transform:scaleX(0.93);transform-origin:100% 0;">00</div>
<div class="t" style="left:-19.80px;width:300px;text-align:right;top:123.26px;font-size:8.8px;line-height:8.8px;color:#000;letter-spacing:0px;transform:scaleX(0.93);transform-origin:100% 0;">252 Ko</div>
<div class="t" style="left:26.80px;top:134.16px;font-size:8.8px;line-height:8.8px;color:#000;font-weight:normal;letter-spacing:0px;transform:scaleX(0.958);transform-origin:0 0;">explorer.exe</div>
<div class="t" style="left:124.00px;top:134.16px;font-size:8.8px;line-height:8.8px;color:#000;font-weight:normal;letter-spacing:0px;transform:scaleX(0.958);transform-origin:0 0;">versus city</div>
<div class="t" style="left:-76.70px;width:300px;text-align:right;top:134.16px;font-size:8.8px;line-height:8.8px;color:#000;letter-spacing:0px;transform:scaleX(0.93);transform-origin:100% 0;">00</div>
<div class="t" style="left:-19.80px;width:300px;text-align:right;top:134.16px;font-size:8.8px;line-height:8.8px;color:#000;letter-spacing:0px;transform:scaleX(0.93);transform-origin:100% 0;">8 388 Ko</div>
<div class="r" style="left:22.00px;top:143.30px;width:262.50px;height:11.30px;background:#e9e7da;"></div>
<div class="t" style="left:26.80px;top:145.06px;font-size:8.8px;line-height:8.8px;color:#000;font-weight:normal;letter-spacing:0px;transform:scaleX(0.958);transform-origin:0 0;">firefox.exe</div>
<div class="t" style="left:124.00px;top:145.06px;font-size:8.8px;line-height:8.8px;color:#000;font-weight:normal;letter-spacing:0px;transform:scaleX(0.958);transform-origin:0 0;">versus city</div>
<div class="t" style="left:-76.70px;width:300px;text-align:right;top:145.06px;font-size:8.8px;line-height:8.8px;color:#000;letter-spacing:0px;transform:scaleX(0.93);transform-origin:100% 0;">00</div>
<div class="t" style="left:-19.80px;width:300px;text-align:right;top:145.06px;font-size:8.8px;line-height:8.8px;color:#000;letter-spacing:0px;transform:scaleX(0.93);transform-origin:100% 0;">57 128 Ko</div>
<div class="t" style="left:26.80px;top:155.96px;font-size:8.8px;line-height:8.8px;color:#000;font-weight:normal;letter-spacing:0px;transform:scaleX(0.958);transform-origin:0 0;">wmiapsrv.exe</div>
<div class="t" style="left:124.00px;top:155.96px;font-size:8.8px;line-height:8.8px;color:#000;font-weight:normal;letter-spacing:0px;transform:scaleX(0.846);transform-origin:0 0;">SYSTEM</div>
<div class="t" style="left:-76.70px;width:300px;text-align:right;top:155.96px;font-size:8.8px;line-height:8.8px;color:#000;letter-spacing:0px;transform:scaleX(0.93);transform-origin:100% 0;">00</div>
<div class="t" style="left:-19.80px;width:300px;text-align:right;top:155.96px;font-size:8.8px;line-height:8.8px;color:#000;letter-spacing:0px;transform:scaleX(0.93);transform-origin:100% 0;">760 Ko</div>
<div class="t" style="left:26.80px;top:166.86px;font-size:8.8px;line-height:8.8px;color:#000;font-weight:normal;letter-spacing:0px;transform:scaleX(0.958);transform-origin:0 0;">svchost.exe</div>
<div class="t" style="left:124.00px;top:166.86px;font-size:8.8px;line-height:8.8px;color:#000;font-weight:normal;letter-spacing:0px;transform:scaleX(0.846);transform-origin:0 0;">SYSTEM</div>
<div class="t" style="left:-76.70px;width:300px;text-align:right;top:166.86px;font-size:8.8px;line-height:8.8px;color:#000;letter-spacing:0px;transform:scaleX(0.93);transform-origin:100% 0;">00</div>
<div class="t" style="left:-19.80px;width:300px;text-align:right;top:166.86px;font-size:8.8px;line-height:8.8px;color:#000;letter-spacing:0px;transform:scaleX(0.93);transform-origin:100% 0;">5 420 Ko</div>
<div class="t" style="left:26.80px;top:177.76px;font-size:8.8px;line-height:8.8px;color:#000;font-weight:normal;letter-spacing:0px;transform:scaleX(0.958);transform-origin:0 0;">svchost.exe</div>
<div class="t" style="left:124.00px;top:177.76px;font-size:8.8px;line-height:8.8px;color:#000;font-weight:normal;letter-spacing:0px;transform:scaleX(0.846);transform-origin:0 0;">SYSTEM</div>
<div class="t" style="left:-76.70px;width:300px;text-align:right;top:177.76px;font-size:8.8px;line-height:8.8px;color:#000;letter-spacing:0px;transform:scaleX(0.93);transform-origin:100% 0;">00</div>
<div class="t" style="left:-19.80px;width:300px;text-align:right;top:177.76px;font-size:8.8px;line-height:8.8px;color:#000;letter-spacing:0px;transform:scaleX(0.93);transform-origin:100% 0;">1 920 Ko</div>
<div class="t" style="left:26.80px;top:188.66px;font-size:8.8px;line-height:8.8px;color:#000;font-weight:normal;letter-spacing:0px;transform:scaleX(0.958);transform-origin:0 0;">jqs.exe</div>
<div class="t" style="left:124.00px;top:188.66px;font-size:8.8px;line-height:8.8px;color:#000;font-weight:normal;letter-spacing:0px;transform:scaleX(0.846);transform-origin:0 0;">SYSTEM</div>
<div class="t" style="left:-76.70px;width:300px;text-align:right;top:188.66px;font-size:8.8px;line-height:8.8px;color:#000;letter-spacing:0px;transform:scaleX(0.93);transform-origin:100% 0;">00</div>
<div class="t" style="left:-19.80px;width:300px;text-align:right;top:188.66px;font-size:8.8px;line-height:8.8px;color:#000;letter-spacing:0px;transform:scaleX(0.93);transform-origin:100% 0;">1 380 Ko</div>
<div class="t" style="left:26.80px;top:199.56px;font-size:8.8px;line-height:8.8px;color:#000;font-weight:normal;letter-spacing:0px;transform:scaleX(0.958);transform-origin:0 0;">svchost.exe</div>
<div class="t" style="left:124.00px;top:199.56px;font-size:8.8px;line-height:8.8px;color:#000;font-weight:normal;letter-spacing:0px;transform:scaleX(0.846);transform-origin:0 0;">SYSTEM</div>
<div class="t" style="left:-76.70px;width:300px;text-align:right;top:199.56px;font-size:8.8px;line-height:8.8px;color:#000;letter-spacing:0px;transform:scaleX(0.93);transform-origin:100% 0;">00</div>
<div class="t" style="left:-19.80px;width:300px;text-align:right;top:199.56px;font-size:8.8px;line-height:8.8px;color:#000;letter-spacing:0px;transform:scaleX(0.93);transform-origin:100% 0;">856 Ko</div>
<div class="t" style="left:26.80px;top:210.46px;font-size:8.8px;line-height:8.8px;color:#000;font-weight:normal;letter-spacing:0px;transform:scaleX(0.958);transform-origin:0 0;">lsass.exe</div>
<div class="t" style="left:124.00px;top:210.46px;font-size:8.8px;line-height:8.8px;color:#000;font-weight:normal;letter-spacing:0px;transform:scaleX(0.846);transform-origin:0 0;">SYSTEM</div>
<div class="t" style="left:-76.70px;width:300px;text-align:right;top:210.46px;font-size:8.8px;line-height:8.8px;color:#000;letter-spacing:0px;transform:scaleX(0.93);transform-origin:100% 0;">00</div>
<div class="t" style="left:-19.80px;width:300px;text-align:right;top:210.46px;font-size:8.8px;line-height:8.8px;color:#000;letter-spacing:0px;transform:scaleX(0.93);transform-origin:100% 0;">1 256 Ko</div>
<div class="t" style="left:26.80px;top:221.36px;font-size:8.8px;line-height:8.8px;color:#000;font-weight:normal;letter-spacing:0px;transform:scaleX(0.958);transform-origin:0 0;">services.exe</div>
<div class="t" style="left:124.00px;top:221.36px;font-size:8.8px;line-height:8.8px;color:#000;font-weight:normal;letter-spacing:0px;transform:scaleX(0.846);transform-origin:0 0;">SYSTEM</div>
<div class="t" style="left:-76.70px;width:300px;text-align:right;top:221.36px;font-size:8.8px;line-height:8.8px;color:#000;letter-spacing:0px;transform:scaleX(0.93);transform-origin:100% 0;">00</div>
<div class="t" style="left:-19.80px;width:300px;text-align:right;top:221.36px;font-size:8.8px;line-height:8.8px;color:#000;letter-spacing:0px;transform:scaleX(0.93);transform-origin:100% 0;">856 Ko</div>
<div class="t" style="left:26.80px;top:232.26px;font-size:8.8px;line-height:8.8px;color:#000;font-weight:normal;letter-spacing:0px;transform:scaleX(0.958);transform-origin:0 0;">winlogon.exe</div>
<div class="t" style="left:124.00px;top:232.26px;font-size:8.8px;line-height:8.8px;color:#000;font-weight:normal;letter-spacing:0px;transform:scaleX(0.846);transform-origin:0 0;">SYSTEM</div>
<div class="t" style="left:-76.70px;width:300px;text-align:right;top:232.26px;font-size:8.8px;line-height:8.8px;color:#000;letter-spacing:0px;transform:scaleX(0.93);transform-origin:100% 0;">00</div>
<div class="t" style="left:-19.80px;width:300px;text-align:right;top:232.26px;font-size:8.8px;line-height:8.8px;color:#000;letter-spacing:0px;transform:scaleX(0.93);transform-origin:100% 0;">768 Ko</div>
<div class="t" style="left:26.80px;top:243.16px;font-size:8.8px;line-height:8.8px;color:#000;font-weight:normal;letter-spacing:0px;transform:scaleX(0.958);transform-origin:0 0;">csrss.exe</div>
<div class="t" style="left:124.00px;top:243.16px;font-size:8.8px;line-height:8.8px;color:#000;font-weight:normal;letter-spacing:0px;transform:scaleX(0.846);transform-origin:0 0;">SYSTEM</div>
<div class="t" style="left:-76.70px;width:300px;text-align:right;top:243.16px;font-size:8.8px;line-height:8.8px;color:#000;letter-spacing:0px;transform:scaleX(0.93);transform-origin:100% 0;">00</div>
<div class="t" style="left:-19.80px;width:300px;text-align:right;top:243.16px;font-size:8.8px;line-height:8.8px;color:#000;letter-spacing:0px;transform:scaleX(0.93);transform-origin:100% 0;">1 336 Ko</div>
<div class="t" style="left:26.80px;top:254.06px;font-size:8.8px;line-height:8.8px;color:#000;font-weight:normal;letter-spacing:0px;transform:scaleX(0.958);transform-origin:0 0;">smss.exe</div>
<div class="t" style="left:124.00px;top:254.06px;font-size:8.8px;line-height:8.8px;color:#000;font-weight:normal;letter-spacing:0px;transform:scaleX(0.846);transform-origin:0 0;">SYSTEM</div>
<div class="t" style="left:-76.70px;width:300px;text-align:right;top:254.06px;font-size:8.8px;line-height:8.8px;color:#000;letter-spacing:0px;transform:scaleX(0.93);transform-origin:100% 0;">00</div>
<div class="t" style="left:-19.80px;width:300px;text-align:right;top:254.06px;font-size:8.8px;line-height:8.8px;color:#000;letter-spacing:0px;transform:scaleX(0.93);transform-origin:100% 0;">44 Ko</div>
<div class="t" style="left:26.80px;top:264.96px;font-size:8.8px;line-height:8.8px;color:#000;font-weight:normal;letter-spacing:0px;transform:scaleX(0.958);transform-origin:0 0;">spoolsv.exe</div>
<div class="t" style="left:124.00px;top:264.96px;font-size:8.8px;line-height:8.8px;color:#000;font-weight:normal;letter-spacing:0px;transform:scaleX(0.846);transform-origin:0 0;">SYSTEM</div>
<div class="t" style="left:-76.70px;width:300px;text-align:right;top:264.96px;font-size:8.8px;line-height:8.8px;color:#000;letter-spacing:0px;transform:scaleX(0.93);transform-origin:100% 0;">00</div>
<div class="t" style="left:-19.80px;width:300px;text-align:right;top:264.96px;font-size:8.8px;line-height:8.8px;color:#000;letter-spacing:0px;transform:scaleX(0.93);transform-origin:100% 0;">264 Ko</div>
<div class="t" style="left:26.80px;top:275.86px;font-size:8.8px;line-height:8.8px;color:#000;font-weight:normal;letter-spacing:0px;transform:scaleX(0.958);transform-origin:0 0;">System</div>
<div class="t" style="left:124.00px;top:275.86px;font-size:8.8px;line-height:8.8px;color:#000;font-weight:normal;letter-spacing:0px;transform:scaleX(0.846);transform-origin:0 0;">SYSTEM</div>
<div class="t" style="left:-76.70px;width:300px;text-align:right;top:275.86px;font-size:8.8px;line-height:8.8px;color:#000;letter-spacing:0px;transform:scaleX(0.93);transform-origin:100% 0;">00</div>
<div class="t" style="left:-19.80px;width:300px;text-align:right;top:275.86px;font-size:8.8px;line-height:8.8px;color:#000;letter-spacing:0px;transform:scaleX(0.93);transform-origin:100% 0;">44 Ko</div>
<div class="t" style="left:26.80px;top:286.76px;font-size:8.8px;line-height:8.8px;color:#000;font-weight:normal;letter-spacing:0px;transform:scaleX(0.958);transform-origin:0 0;">Processus inactif du s...</div>
<div class="t" style="left:124.00px;top:286.76px;font-size:8.8px;line-height:8.8px;color:#000;font-weight:normal;letter-spacing:0px;transform:scaleX(0.846);transform-origin:0 0;">SYSTEM</div>
<div class="t" style="left:-76.70px;width:300px;text-align:right;top:286.76px;font-size:8.8px;line-height:8.8px;color:#000;letter-spacing:0px;transform:scaleX(0.93);transform-origin:100% 0;">99</div>
<div class="t" style="left:-19.80px;width:300px;text-align:right;top:286.76px;font-size:8.8px;line-height:8.8px;color:#000;letter-spacing:0px;transform:scaleX(0.93);transform-origin:100% 0;">16 Ko</div>
<div class="t" style="left:26.80px;top:297.66px;font-size:8.8px;line-height:8.8px;color:#000;font-weight:normal;letter-spacing:0px;transform:scaleX(0.958);transform-origin:0 0;">svchost.exe</div>
<div class="t" style="left:124.00px;top:297.66px;font-size:8.8px;line-height:8.8px;color:#000;font-weight:normal;letter-spacing:0px;transform:scaleX(0.846);transform-origin:0 0;">SERVICE RÉSEAU</div>
<div class="t" style="left:-76.70px;width:300px;text-align:right;top:297.66px;font-size:8.8px;line-height:8.8px;color:#000;letter-spacing:0px;transform:scaleX(0.93);transform-origin:100% 0;">00</div>
<div class="t" style="left:-19.80px;width:300px;text-align:right;top:297.66px;font-size:8.8px;line-height:8.8px;color:#000;letter-spacing:0px;transform:scaleX(0.93);transform-origin:100% 0;">1 020 Ko</div>
<div class="t" style="left:26.80px;top:308.56px;font-size:8.8px;line-height:8.8px;color:#000;font-weight:normal;letter-spacing:0px;transform:scaleX(0.958);transform-origin:0 0;">alg.exe</div>
<div class="t" style="left:124.00px;top:308.56px;font-size:8.8px;line-height:8.8px;color:#000;font-weight:normal;letter-spacing:0px;transform:scaleX(0.846);transform-origin:0 0;">SERVICE LOCAL</div>
<div class="t" style="left:-76.70px;width:300px;text-align:right;top:308.56px;font-size:8.8px;line-height:8.8px;color:#000;letter-spacing:0px;transform:scaleX(0.93);transform-origin:100% 0;">00</div>
<div class="t" style="left:-19.80px;width:300px;text-align:right;top:308.56px;font-size:8.8px;line-height:8.8px;color:#000;letter-spacing:0px;transform:scaleX(0.93);transform-origin:100% 0;">292 Ko</div>
<div class="t" style="left:26.80px;top:319.46px;font-size:8.8px;line-height:8.8px;color:#000;font-weight:normal;letter-spacing:0px;transform:scaleX(0.958);transform-origin:0 0;">svchost.exe</div>
<div class="t" style="left:124.00px;top:319.46px;font-size:8.8px;line-height:8.8px;color:#000;font-weight:normal;letter-spacing:0px;transform:scaleX(0.846);transform-origin:0 0;">SERVICE LOCAL</div>
<div class="t" style="left:-76.70px;width:300px;text-align:right;top:319.46px;font-size:8.8px;line-height:8.8px;color:#000;letter-spacing:0px;transform:scaleX(0.93);transform-origin:100% 0;">00</div>
<div class="t" style="left:-19.80px;width:300px;text-align:right;top:319.46px;font-size:8.8px;line-height:8.8px;color:#000;letter-spacing:0px;transform:scaleX(0.93);transform-origin:100% 0;">324 Ko</div>
<div class="t" style="left:26.80px;top:330.36px;font-size:8.8px;line-height:8.8px;color:#000;font-weight:normal;letter-spacing:0px;transform:scaleX(0.958);transform-origin:0 0;">wdfmgr.exe</div>
<div class="t" style="left:124.00px;top:330.36px;font-size:8.8px;line-height:8.8px;color:#000;font-weight:normal;letter-spacing:0px;transform:scaleX(0.846);transform-origin:0 0;">SERVICE LOCAL</div>
<div class="t" style="left:-76.70px;width:300px;text-align:right;top:330.36px;font-size:8.8px;line-height:8.8px;color:#000;letter-spacing:0px;transform:scaleX(0.93);transform-origin:100% 0;">00</div>
<div class="t" style="left:-19.80px;width:300px;text-align:right;top:330.36px;font-size:8.8px;line-height:8.8px;color:#000;letter-spacing:0px;transform:scaleX(0.93);transform-origin:100% 0;">76 Ko</div>
<div class="r" style="left:20.70px;top:402.30px;width:11.20px;height:10.20px;background:linear-gradient(135deg,#dcdcd6,#fafaf8);border:1px solid #6e7470;box-sizing:border-box;"></div>
<div class="t" style="left:33.60px;top:404.46px;font-size:8.8px;line-height:8.8px;color:#000;font-weight:normal;letter-spacing:0px;transform:scaleX(0.955);transform-origin:0 0;">Afficher les processus de tous les utilisateurs</div>
<div class="r" style="left:294.40px;top:402.40px;width:89.60px;height:16.50px;background:linear-gradient(#ffffff,#f2f2ec 80%,#dcdcd2);border:1px solid #3c4a50;border-radius:3px;box-sizing:border-box;"></div>
<div class="t" style="left:298.75px;top:407.76px;font-size:8.8px;line-height:8.8px;color:#000;font-weight:normal;letter-spacing:0px;transform:scaleX(0.93);transform-origin:0 0;">Terminer le processus</div>
<div class="t" style="left:3.75px;top:442.16px;font-size:8.8px;line-height:8.8px;color:#000;font-weight:normal;letter-spacing:0px;transform:scaleX(0.95);transform-origin:0 0;">Processus : 23</div>
<div class="t" style="left:80.00px;top:442.16px;font-size:8.8px;line-height:8.8px;color:#000;font-weight:normal;letter-spacing:0px;transform:scaleX(0.95);transform-origin:0 0;">UC utilisée : 0%</div>
<div class="t" style="left:173.75px;top:442.16px;font-size:8.8px;line-height:8.8px;color:#000;font-weight:normal;letter-spacing:0px;transform:scaleX(0.958);transform-origin:0 0;">Mém. util. : 269972 Ko / 635460 K</div>
<div class="r" style="left:76.25px;top:438.00px;width:1.00px;height:14.00px;background:#cfcbbb;"></div>
<div class="r" style="left:77.25px;top:438.00px;width:1.00px;height:14.00px;background:#fbfaf4;"></div>
<div class="r" style="left:170.00px;top:438.00px;width:1.00px;height:14.00px;background:#cfcbbb;"></div>
<div class="r" style="left:171.00px;top:438.00px;width:1.00px;height:14.00px;background:#fbfaf4;"></div>
<div class="r" style="left:357.50px;top:438.00px;width:1.00px;height:14.00px;background:#cfcbbb;"></div>
<div class="r" style="left:358.50px;top:438.00px;width:1.00px;height:14.00px;background:#fbfaf4;"></div>
</div>
<div class="r" style="left:798.00px;top:0.00px;width:2.00px;height:458.00px;background:#f6f6f4;"></div>
</div></body></html>
